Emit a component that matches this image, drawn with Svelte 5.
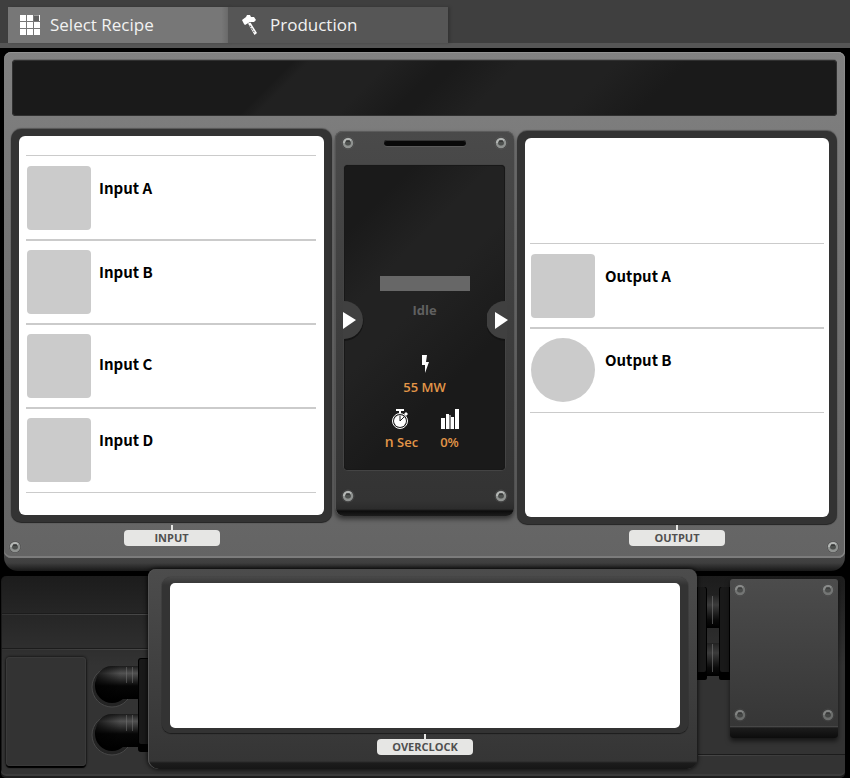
<script>
  const tabs = [
    { name: 'Select Recipe', icon: 'grid', active: true },
    { name: 'Production', icon: 'hammer', active: false }
  ];
  const inputs = [
    { name: 'Input A' },
    { name: 'Input B' },
    { name: 'Input C', single: true },
    { name: 'Input D' }
  ];
  const outputs = [{ name: 'Output A' }, { name: 'Output B', fluid: true }];
</script>

{#snippet screw(dim)}
  <svg class="screw" class:dim width="14" height="14" viewBox="0 0 14 14" aria-hidden="true">
    <circle cx="7" cy="7" r="6.500" fill="#8a8a8a" opacity=".25" />
    <circle cx="7" cy="7" r="6" fill="#333" opacity=".5" />
    <circle cx="7" cy="7" r="4" fill="#5c5f5d" stroke="#8f9290" stroke-width="2.500" />
    <path d="M3 7a4 4 0 0 1 7-2.500" fill="none" stroke="#b4b7b5" stroke-width="2" />
    <path d="M5 5h4l1 2-1 2H5L4 7z" fill="#4d504e" />
    <path d="M5 5h4" stroke="#222" />
  </svg>
{/snippet}

{#snippet items(list)}
  <ul class="items">
    {#each list as item}
      <li>
        <span class="thumb" class:fluid={item.fluid}></span>
        <span class="name" class:single={item.single}>{item.name}</span>
      </li>
    {/each}
  </ul>
{/snippet}

<div class="app">
  <nav class="tabs">
    {#each tabs as tab}
      <button type="button" class="tab" class:active={tab.active}>
        {#if tab.icon === 'grid'}
          <svg width="20" height="20" viewBox="0 0 20 20" fill="#fff" shape-rendering="crispEdges" aria-hidden="true">
            <path d="M0 0h6v6H0zM7 0h6v6H7zM0 7h6v6H0zM7 7h6v6H7zM14 7h6v6h-6zM0 14h6v6H0zM7 14h6v6H7zM14 14h6v6h-6z" />
            <path d="M14 1h5v5h-5z" fill="#606060" />
            <path d="M14 0h5v1h-5z" fill="#999" />
            <path d="M19 0h1v6h-1z" />
          </svg>
        {:else}
          <svg width="20" height="20" viewBox="0 0 20 20" aria-hidden="true">
            <path d="M2 5 6 2 7 0H10L11 2 14 2 16 5 14 7 10 7 5 10 4 9Z" fill="#fff" />
            <path d="M8 8.500 10.500 7.500 17 18 14.500 20Z" fill="#fff" />
            <path d="M10 10.500 14.500 17.500" stroke="#565656" stroke-dasharray="2 1" />
          </svg>
        {/if}
        <span>{tab.name}</span>
      </button>
    {/each}
  </nav>

  <main class="machine">
    <div class="face">
      <div class="display"></div>
      <div class="columns">
        <section class="side">
          <div class="bezel in">{@render items(inputs)}</div>
        </section>

        <section class="core">
          <div class="core-top">
            {@render screw(false)}
            <span class="slot"></span>
            {@render screw(false)}
          </div>
          <div class="screen">
            <div class="progress"></div>
            <div class="state">Idle</div>
            <div class="stat power">
              <svg width="10" height="20" viewBox="0 0 10 20" fill="#fff" aria-hidden="true">
                <path d="M2 1h5L6 8h3L5 19V11H2z" />
              </svg>
              <span>55 MW</span>
            </div>
            <div class="pair">
              <div class="stat">
                <svg width="20" height="20" viewBox="0 0 20 20" aria-hidden="true">
                  <path d="M6 0h8v2h-3v2H9V2H6zM16 3l2 2-2 2-2-2z" fill="#fff" />
                  <circle cx="10" cy="12" r="7.500" fill="none" stroke="#fff" />
                  <circle cx="10" cy="12" r="6" fill="#fff" />
                  <path d="M10 12V6.500M10 12l4-4" stroke="#1b1b1b" />
                </svg>
                <span class="time"><var>n</var> Sec</span>
              </div>
              <div class="stat">
                <svg width="18" height="20" viewBox="0 0 18 20" fill="#fff" shape-rendering="crispEdges" aria-hidden="true">
                  <path d="M0 9h4v11H0zM5 5h3v15H5zM10 8h3v12h-3zM14 0h4v20h-4z" />
                  <path d="M8 6h2v14H8z" fill="#888" />
                </svg>
                <span>0%</span>
              </div>
            </div>
            <svg class="arrow left" width="21" height="40" viewBox="0 0 21 40" aria-hidden="true">
              <path d="M1 1a19 19 0 0 1 0 39z" fill="#151515" />
              <path d="M0 0h1a19 19 0 0 1 0 38H0z" fill="#404040" />
              <path d="M0 11 13 19 0 28z" fill="#fff" />
            </svg>
            <svg class="arrow right" width="21" height="40" viewBox="0 0 21 40" aria-hidden="true">
              <path d="M18 1a19 19 0 0 0 0 39z" fill="#151515" />
              <path d="M18 0a19 19 0 0 0 0 38h2V0z" fill="#404040" />
              <path d="M8 11 21 19 8 28z" fill="#fff" />
            </svg>
          </div>
          <div class="core-bottom">
            {@render screw(false)}
            {@render screw(false)}
          </div>
        </section>

        <section class="side">
          <div class="bezel out">{@render items(outputs)}</div>
        </section>
      </div>
      <div class="captions">
        <div class="screw-slot first">{@render screw(false)}</div>
        <div class="plate input">INPUT</div>
        <div class="plate output">OUTPUT</div>
        <div class="screw-slot last">{@render screw(false)}</div>
      </div>
    </div>
  </main>

  <footer class="base">
    <div class="left-bay">
      <div class="hatch"></div>
      <svg width="61" height="104" viewBox="0 0 61 104" aria-hidden="true">
        <defs>
          <linearGradient id="pipe" x1="0" y1="0" x2="0" y2="1">
            <stop offset="0" stop-color="#1c1c1c" />
            <stop offset=".22" stop-color="#525252" />
            <stop offset=".6" stop-color="#060606" />
            <stop offset="1" stop-color="#000" />
          </linearGradient>
          <linearGradient id="shade" x1="0" x2="1">
            <stop offset="0" stop-color="#000" />
            <stop offset=".8" stop-color="#000" stop-opacity="0" />
          </linearGradient>
        </defs>
        {#each [8, 56] as y}
          <g transform="translate(0 {y})">
            <circle cx="25" cy="21" r="20" fill="#242424" stroke="#484848" />
            <circle cx="25" cy="20" r="17" fill="#000" />
            <path d="M51 0H25a16 16 0 0 0-16 17 16 16 0 0 0 16 16h26z" fill="url(#pipe)" />
            <path d="M40 0H25a16 16 0 0 0-16 17 16 16 0 0 0 16 16h15z" fill="url(#shade)" opacity=".7" />
            <path d="M39.500 1v16M45.500 1v16" stroke="#777" opacity=".5" />
          </g>
        {/each}
        <path d="M51 3q0-3 3-3h7v94H54q-3 0-3-3z" fill="#000" />
        <path d="M52 3q0-2 2-2h7v85H54q-2 0-2-2z" fill="#191919" />
      </svg>
    </div>

    <section class="overclock">
      <div class="oc-bezel"><div class="oc-screen"></div></div>
      <div class="plate">OVERCLOCK</div>
    </section>

    <div class="right-bay">
      <svg width="33" height="96" viewBox="0 0 33 96" aria-hidden="true">
        <defs>
          <linearGradient id="joint" x1="0" y1="0" x2="0" y2="1">
            <stop offset="0" stop-color="#222" />
            <stop offset=".3" stop-color="#3c3c3c" />
            <stop offset=".75" stop-color="#0a0a0a" />
            <stop offset="1" stop-color="#000" />
          </linearGradient>
        </defs>
        {#each [8, 56] as y}
          <rect x="9" {y} width="14" height="33" fill="url(#joint)" />
          <rect x="15" y={y + 1} width="1" height="28" fill="#777" opacity=".6" />
        {/each}
        <path d="M0 0h8q2 0 2 3v88q0 2-2 2H0zM24 0h9v93h-9q-2 0-2-2V3q0-3 2-3z" fill="#000" />
        <path d="M1 0h6q2 0 2 3v80q0 2-2 2H1zM25 0h7v85h-7q-2 0-2-2V3q0-3 2-3z" fill="#191919" />
      </svg>
      <div class="cover">
        <div>{@render screw(true)}{@render screw(true)}</div>
        <div>{@render screw(true)}{@render screw(true)}</div>
      </div>
    </div>
  </footer>
</div>

<style>
  :global(body) {
    margin: 0;
    background: #000;
  }
  .app,
  .app * {
    box-sizing: border-box;
  }
  .app {
    background: #000;
    font-family: 'Open Sans', 'Noto Sans', sans-serif;
    overflow: hidden;
  }
  svg {
    display: block;
    flex: none;
  }

  .tabs {
    display: flex;
    height: 48px;
    padding: 7px 8px 0;
    background: #3f3f3f;
    border-bottom: 5px solid #565656;
  }
  .tab {
    display: flex;
    align-items: center;
    gap: 10px;
    width: 220px;
    padding: 0 12px;
    border: 0;
    background: #565656;
    color: #f2f2f2;
    font: 400 17px/24px 'Open Sans', 'Noto Sans', sans-serif;
    box-shadow: 2px 0 3px #0003;
  }
  .tab.active {
    background: linear-gradient(90deg, #777 97%, #6a6a6a);
  }

  .machine {
    margin: 4px 5px 0 4px;
    padding-bottom: 13px;
    border-radius: 8px 8px 14px 14px;
    background: linear-gradient(#444 calc(100% - 14px), #3e3e3e calc(100% - 8px), #181818);
  }
  .face {
    padding: 8px 8px 3px 7px;
    border-radius: 7px;
    background: linear-gradient(#818181, #7c7c7c 16%, #646464);
    box-shadow: inset 0 1px #929292, inset -1px 0 #8a8a8a, inset 0 -2px #7c7c7c;
  }
  .display {
    height: 56px;
    margin-left: 1px;
    border-radius: 4px;
    background: linear-gradient(135deg, #1a1a1a 32%, #212121 34%, #212121 43%, #1a1a1a 49%, #1a1a1a 51%, #212121 58%, #212121 69%, #1a1a1a 77%);
    box-shadow: inset 0 0 0 1px #303030, 0 -1px #6a6a6a;
  }
  .columns,
  .captions {
    display: grid;
    grid-template-columns: 321fr 179px 320fr;
    column-gap: 3px;
  }
  .columns {
    margin-top: 13px;
  }
  .bezel {
    display: flex;
    flex-direction: column;
    justify-content: center;
    height: 393px;
    border: 8px solid #333;
    border-width: 7px 8px;
    border-radius: 10px;
    background: #333;
    box-shadow: 0 -1px 1px #555, 0 1px 1px #222;
  }
  .bezel.out {
    margin-top: 2px;
  }
  .items {
    flex: 1;
    display: flex;
    flex-direction: column;
    justify-content: center;
    margin: 0;
    padding: 0 8px 0 7px;
    list-style: none;
    background: #fff;
    border-radius: 6px;
  }
  .bezel.in .items {
    padding-bottom: 4px;
  }
  .bezel.out .items {
    padding: 0 5px;
  }
  .items li {
    display: flex;
    align-items: center;
    gap: 8px;
    padding: 9px 1px;
    border-top: 2px solid #cbcbcb;
  }
  .bezel.out li {
    gap: 10px;
  }
  .items li:first-child {
    border-top-width: 1px;
    padding-top: 10px;
  }
  .items li:last-child {
    border-bottom: 1px solid #cbcbcb;
    padding-bottom: 10px;
  }
  .thumb {
    width: 64px;
    height: 64px;
    border-radius: 4px;
    background: #cbcbcb;
  }
  .thumb.fluid {
    border-radius: 50%;
  }
  .name {
    padding-bottom: 20px;
    color: #000;
    font: 700 15px/16px 'Noto Sans CJK SC', 'Open Sans', sans-serif;
  }
  .name.single {
    padding-bottom: 4px;
  }

  .core {
    display: flex;
    flex-direction: column;
    height: 385px;
    margin-top: 2px;
    padding: 0 9px 7px;
    border-radius: 8px;
    background: linear-gradient(#4a4a4a, #333 370px, #2c2c2c 378px, #0c0c0c 380px, #1c1c1c);
    box-shadow: inset 0 1px #5c5c5c, inset 1px 0 #555, 0 3px 5px #0008;
  }
  .core-top,
  .core-bottom {
    display: flex;
    justify-content: space-between;
    align-items: center;
    margin: 0 -3px;
  }
  .core-top {
    height: 24px;
    margin-bottom: 10px;
  }
  .core-bottom {
    margin-top: 19px;
  }
  .slot {
    width: 82px;
    height: 6px;
    border-radius: 3px;
    background: #080808;
    box-shadow: inset 0 1px #333, 0 1px #5a5a5a;
  }
  .screen {
    position: relative;
    display: flex;
    flex-direction: column;
    align-items: center;
    height: 305px;
    padding-top: 111px;
    border-radius: 4px;
    background: linear-gradient(135deg, #1a1a1a 15%, #222 32%, #222 46%, #1a1a1a 70%);
    box-shadow: inset 0 0 0 1px #181818, 0 0 0 1px #444;
    font-size: 13px;
    font-weight: 600;
    line-height: 18px;
    color: #e39648;
  }
  .progress {
    width: 90px;
    height: 15px;
    background: #676767;
  }
  .state {
    margin-top: 10px;
    font-weight: 700;
    color: #606060;
  }
  .stat {
    display: flex;
    flex-direction: column;
    align-items: center;
    gap: 4px;
    width: 50px;
    white-space: nowrap;
  }
  .power {
    margin-top: 35px;
  }
  .pair {
    display: flex;
    margin-top: 13px;
  }
  .time {
    padding-left: 4px;
  }
  .time var {
    font-size: 14px;
    font-style: normal;
    line-height: 16px;
  }
  .arrow {
    position: absolute;
    top: 136px;
  }
  .arrow.left {
    left: -1px;
  }
  .arrow.right {
    right: -3px;
  }

  .captions {
    grid-template-areas: 'in . out';
    align-items: start;
    height: 25px;
    margin-top: 6px;
  }
  .input,
  .first {
    grid-area: in;
  }
  .output,
  .last {
    grid-area: out;
  }
  .screw-slot {
    margin: 10px -3px 0;
  }
  .last {
    justify-self: end;
  }
  .plate {
    position: relative;
    justify-self: center;
    width: 96px;
    border-radius: 4px;
    background: #e6e6e4;
    color: #505050;
    font-size: 11px;
    font-weight: 700;
    line-height: 16px;
    text-align: center;
  }
  .plate::before {
    content: '';
    position: absolute;
    left: 47px;
    top: -5px;
    width: 2px;
    height: 5px;
    background: #e6e6e4;
  }
  .screw.dim {
    opacity: 0.6;
  }

  .base {
    display: grid;
    grid-template-columns: 147px 1fr 148px;
    margin: 5px 5px 0 1px;
    height: 202px;
    border-radius: 5px;
    background:
      linear-gradient(#1c1c1c, #1c1c1c) 0 37px / 147px 1px no-repeat,
      linear-gradient(90deg, #333, #484848) 0 38px / 147px 1px no-repeat,
      linear-gradient(#1c1c1c, #1c1c1c) 0 72px / 147px 1px no-repeat,
      linear-gradient(90deg, #333, #484848) 0 73px / 147px 1px no-repeat,
      linear-gradient(#1c1c1c, #1c1c1c) 100% 178px / 147px 1px no-repeat,
      linear-gradient(90deg, #484848, #333) 100% 179px / 147px 1px no-repeat,
      linear-gradient(#1c1c1c, #333 90px);
    box-shadow: inset 0 -2px #1e1e1e, inset 0 -4px #3c3c3c, inset 1px 0 #1a1a1a;
  }
  .left-bay {
    display: flex;
    align-items: flex-end;
    justify-content: space-between;
    padding: 0 0 12px 5px;
  }
  .left-bay svg {
    margin-bottom: 4px;
  }
  .hatch {
    width: 80px;
    height: 109px;
    border-radius: 4px;
    background: #333;
    box-shadow: inset 0 0 0 1px #3a3a3a, 0 2px 1px #000, 0 0 2px 1px #1c1c1c;
  }
  .overclock {
    display: flex;
    flex-direction: column;
    align-items: center;
    height: 200px;
    margin-top: -7px;
    padding: 8px 9px 0 14px;
    border-radius: 8px 8px 10px 10px;
    background: linear-gradient(#4c4c4c, #353535 192px, #1c1c1c 194px, #161616);
    box-shadow: inset 1px 0 #555, 0 0 5px #000;
    position: relative;
  }
  .oc-bezel {
    align-self: stretch;
    padding: 6px 8px 5px;
    border-radius: 9px;
    background: linear-gradient(#484848, #333 8px);
    box-shadow: 0 1px 1px #1c1c1c, 0 0 1px #222;
  }
  .oc-screen {
    height: 145px;
    border-radius: 5px;
    background: #fff;
  }
  .overclock .plate {
    margin-top: 6px;
  }
  .right-bay {
    display: flex;
    padding-top: 3px;
  }
  .right-bay > svg {
    margin-top: 8px;
  }
  .cover {
    flex: 1;
    display: flex;
    flex-direction: column;
    justify-content: space-between;
    height: 159px;
    margin-right: 7px;
    padding: 4px 3px 16px;
    border-radius: 3px;
    background: linear-gradient(#4c4c4c, #363636 147px, #555 147px, #1c1c1c 149px, #0c0c0c);
    box-shadow: 0 3px 5px #0009;
  }
  .cover > div {
    display: flex;
    justify-content: space-between;
  }
</style>
